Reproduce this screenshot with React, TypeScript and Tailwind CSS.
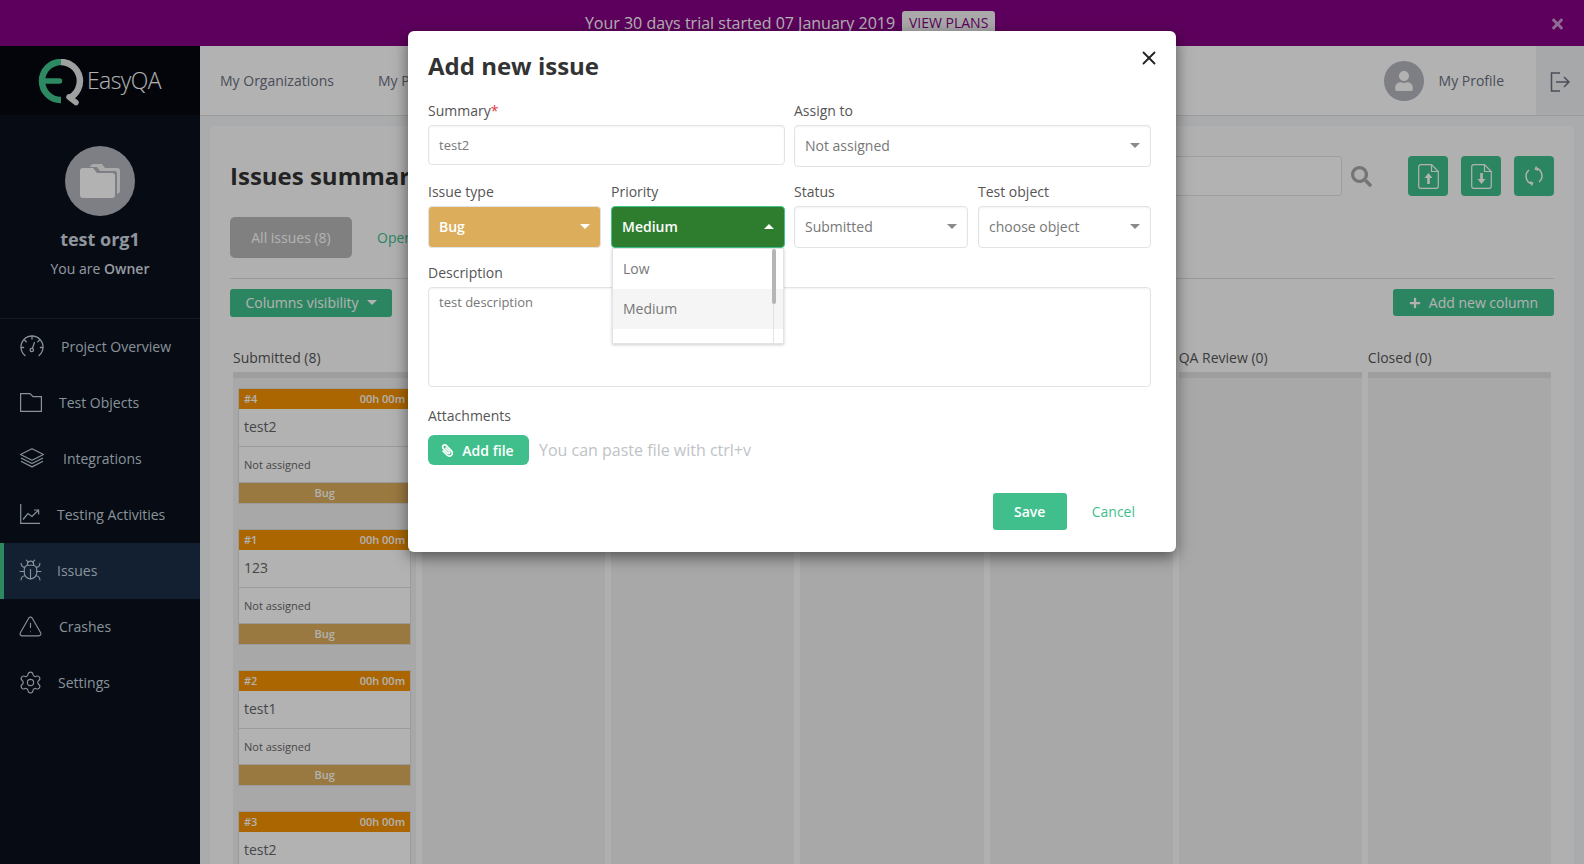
import React from "react";
import { Bug, TriangleAlert, Settings, X } from "lucide-react";
import { FaPaperclip, FaPlus, FaSearch, FaTimes, FaUser } from "react-icons/fa";

type IconProps = { className?: string };

function GaugeIcon({ className }: IconProps) {
  return (
    <svg className={className} width="24" height="22" viewBox="0 0 24 22" fill="none" stroke="currentColor" strokeWidth="1.3" strokeLinecap="round">
      <path d="M5 20.5 A11 11 0 1 1 19 20.5" />
      <path d="M12 1.5V4 M4.5 5 L6.2 6.7 M19.5 5 L17.8 6.7 M1.2 12.5H3.6 M22.8 12.5H20.4" />
      <path d="M12.4 13.5 L14.4 7.5" />
      <circle cx="11.8" cy="15" r="1.7" />
    </svg>
  );
}

function FolderIcon({ className }: IconProps) {
  return (
    <svg className={className} width="22" height="19" viewBox="0 0 22 19" fill="none" stroke="currentColor" strokeWidth="1.2">
      <path d="M0.6 0.6 H10 L13 3.6 H21.4 V18.4 H0.6 Z" />
    </svg>
  );
}

function LayersIcon({ className }: IconProps) {
  return (
    <svg className={className} width="24" height="20" viewBox="0 0 24 20" fill="none" stroke="currentColor" strokeWidth="1.2" strokeLinejoin="round">
      <path d="M12 0.8 L23.5 6.5 L12 12.2 L0.5 6.5 Z" />
      <path d="M1 10 L12 15.5 L23 10" />
      <path d="M1 13.3 L12 18.9 L23 13.3" />
    </svg>
  );
}

function ChartIcon({ className }: IconProps) {
  return (
    <svg className={className} width="20" height="20" viewBox="0 0 20 20" fill="none" stroke="currentColor" strokeWidth="1.2">
      <path d="M0.7 0 V19.3 H20" />
      <path d="M3 15.5 L8 9.5 L12 12.5 L18.5 6" />
      <path d="M14 6 H18.6 V10.5" />
    </svg>
  );
}

function LogoutIcon({ className }: IconProps) {
  return (
    <svg className={className} width="20" height="20" viewBox="0 0 20 20" fill="none" stroke="currentColor" strokeWidth="1.5">
      <path d="M10 1 H1.5 V19 H10" />
      <path d="M6 10 H19 M14 5 L19 10 L14 15" />
    </svg>
  );
}

function FileArrowIcon({ down }: { down?: boolean }) {
  return (
    <svg width="21" height="25" viewBox="0 0 21 25" fill="none" stroke="#fff" strokeWidth="1.2">
      <path d="M3 0.7 H13.5 L20.3 7.5 V22 Q20.3 24.3 18 24.3 H3 Q0.7 24.3 0.7 22 V3 Q0.7 0.7 3 0.7 Z" />
      <path d="M13.5 0.7 V7.5 H20.3" />
      {down ? (
        <path d="M9.2 9 H11.8 V15 H14.5 L10.5 20 L6.5 15 H9.2 Z" fill="#fff" stroke="none" />
      ) : (
        <path d="M9.2 20 H11.8 V14 H14.5 L10.5 9 L6.5 14 H9.2 Z" fill="#fff" stroke="none" />
      )}
    </svg>
  );
}

function BugIcon({ className }: IconProps) {
  return <Bug className={className} strokeWidth={1.1} />;
}
function AlertIcon({ className }: IconProps) {
  return <TriangleAlert className={className} strokeWidth={1.1} />;
}
function GearIcon({ className }: IconProps) {
  return <Settings className={className} strokeWidth={1.1} />;
}

const lucideClass = "w-[25px] h-[25px] -ml-[2px]";

const nav = [
  { label: "Project Overview", Icon: GaugeIcon, textClass: "ml-[17px]", iconClass: "" },
  { label: "Test Objects", Icon: FolderIcon, textClass: "ml-[15px]", iconClass: "" },
  { label: "Integrations", Icon: LayersIcon, textClass: "ml-[19px]", iconClass: "" },
  { label: "Testing Activities", Icon: ChartIcon, textClass: "ml-[13px]", iconClass: "" },
  { label: "Issues", Icon: BugIcon, textClass: "ml-[13px]", iconClass: lucideClass, active: true },
  { label: "Crashes", Icon: AlertIcon, textClass: "ml-[15px]", iconClass: lucideClass },
  { label: "Settings", Icon: GearIcon, textClass: "ml-[14px]", iconClass: lucideClass },
];

const cards = [
  { id: "#4", title: "test2" },
  { id: "#1", title: "123" },
  { id: "#2", title: "test1" },
  { id: "#3", title: "test2" },
];

const columns = ["Submitted (8)", "Open (0)", "In Progress (0)", "Resolved (0)", "Testing (0)", "QA Review (0)", "Closed (0)"];

function Logo() {
  return (
    <svg width="46" height="48" viewBox="0 0 46 48" className="shrink-0 mt-[4px]">
      <path d="M23 3 A19 19 0 0 0 23 41" fill="none" stroke="#41c48d" strokeWidth="6.5" />
      <path d="M23 3 A19 19 0 0 1 31 39.2" fill="none" stroke="#e6e6e6" strokeWidth="6.5" />
      <path d="M31 38 L38 43.5" fill="none" stroke="#e6e6e6" strokeWidth="5.5" strokeLinecap="round" />
      <path d="M7 22 H21.5" fill="none" stroke="#41c48d" strokeWidth="5.5" strokeLinecap="round" />
    </svg>
  );
}

function OrgFolders() {
  return (
    <svg width="40" height="36" viewBox="0 0 40 36">
      <path d="M14 1 H22 L25 5 H37 Q40 5 40 8 V28 Q40 30 37 31 V10 Q37 8 35 8 H20 L17 4 H10 Q11 1 14 1 Z" fill="#ffffff" fillOpacity="0.85" />
      <path d="M3 5 H13 L17 10 H32 Q35 10 35 13 V32 Q35 35 32 35 H3 Q0 35 0 32 V8 Q0 5 3 5 Z" fill="#ffffff" />
    </svg>
  );
}

function Caret({ up, color }: { up?: boolean; color: string }) {
  return (
    <svg width="10" height="5" viewBox="0 0 10 5" className="shrink-0">
      <path d={up ? "M0 5 L5 0 L10 5 Z" : "M0 0 L10 0 L5 5 Z"} fill={color} />
    </svg>
  );
}

function RefreshIcon() {
  return (
    <svg width="20" height="20" viewBox="0 0 20 20" fill="none" stroke="#fff" strokeWidth="1.5">
      <path d="M12.5 2.2 A8 8 0 0 1 15 16" />
      <path d="M7.5 17.8 A8 8 0 0 1 5 4" />
      <path d="M12.5 0.5 L11.5 3 L14 4" />
      <path d="M7.5 19.5 L8.5 17 L6 16" />
    </svg>
  );
}

function IssueCard({ id, title }: { id: string; title: string }) {
  return (
    <div className="h-[116px] mb-[25px] border border-[#dedede] bg-white flex flex-col shrink-0">
      <div className="h-[20px] bg-[#f59203] flex items-center justify-between pl-[5px] pr-[5px] text-[11px] text-white font-semibold">
        <span>{id}</span>
        <span>00h 00m</span>
      </div>
      <div className="h-[38px] flex items-center px-[5px] pb-[2px] text-[14px] text-[#666] border-b border-[#dedede]">{title}</div>
      <div className="h-[36px] flex items-center px-[5px] pt-[2px] text-[11px] text-[#666] border-b border-[#dedede]">Not assigned</div>
      <div className="h-[20px] bg-[#dcae5c] flex items-center justify-center text-[11px] text-white font-semibold">Bug</div>
    </div>
  );
}

function Field({ label, width, children, required }: { label: string; width: string; children: React.ReactNode; required?: boolean }) {
  return (
    <div className={`${width} relative shrink-0`}>
      <div className="h-[20px] text-[14px] leading-[20px] text-[#555] mb-[4px]">
        {label}
        {required && <span className="text-[#e0383e]">*</span>}
      </div>
      {children}
    </div>
  );
}

function SelectBox({ value }: { value: string }) {
  return (
    <div className="h-[42px] border border-[#e3e3e3] rounded-[4px] bg-white flex items-center justify-between pl-[10px] pr-[10px] pb-[2px] text-[14px] text-[#777] shadow-[inset_0_1px_2px_rgba(0,0,0,0.05)]">
      <span>{value}</span>
      <Caret color="#8a8a8a" />
    </div>
  );
}

export default function App() {
  return (
    <div className="relative h-screen w-full overflow-hidden font-['Open_Sans',sans-serif] bg-[#f4f5f6]">
      <div className="h-[46px] bg-[#860086] flex items-center justify-center relative text-white text-[16px]">
        <div className="flex items-center gap-[7px] ml-[-4px]">
          <span>Your 30 days trial started 07 January 2019</span>
          <span className="h-[24px] w-[93px] text-center bg-[#f2f2f2] text-[#860086] text-[14px] leading-[24px] rounded-[3px]">VIEW PLANS</span>
        </div>
        <FaTimes className="absolute right-[19px] top-[16px] w-[15px] h-[16px] text-white/60" />
      </div>

      <div className="flex h-[818px]">
        <aside className="w-[200px] shrink-0 bg-[#09101d] flex flex-col">
          <div className="h-[69px] bg-[#050811] flex items-center pl-[38px] gap-[3px]">
            <Logo />
            <span className="text-[23px] font-light text-white tracking-[-0.6px]">EasyQA</span>
          </div>
          <div className="h-[204px] border-b border-[#1c2838] flex flex-col items-center pt-[31px]">
            <div className="w-[70px] h-[70px] rounded-full bg-[#b4b6be] flex items-center justify-center">
              <OrgFolders />
            </div>
            <div className="mt-[10px] text-[18px] font-bold text-[#cfd6e0] leading-[26px]">test org1</div>
            <div className="mt-[7px] text-[14px] text-[#d8dde4] leading-[20px]">
              You are <span className="font-semibold">Owner</span>
            </div>
          </div>
          <nav className="flex flex-col">
            {nav.map(({ label, Icon, textClass, iconClass, active }) => (
              <div
                key={label}
                className={
                  active
                    ? "h-[56px] flex items-center pl-[16px] pb-[2px] border-l-[4px] border-[#41c48d] bg-[#1a2e48] text-[#c4d0dc] text-[14px]"
                    : "h-[56px] flex items-center pl-[20px] pb-[2px] text-[#c4d0dc] text-[14px]"
                }
              >
                <span className="w-[24px] flex items-center justify-start">
                  <Icon className={iconClass} />
                </span>
                <span className={textClass}>{label}</span>
              </div>
            ))}
          </nav>
        </aside>

        <div className="flex-1 flex flex-col min-w-0">
          <header className="h-[70px] shrink-0 bg-white border-b border-[#e0e0e0] flex items-stretch text-[14px] text-[#6a6f80]">
            <div className="flex items-center pl-[20px] gap-[44px]">
              <span>My Organizations</span>
              <span>My Projects</span>
            </div>
            <div className="ml-auto flex items-center">
              <div className="w-[40px] h-[40px] rounded-full bg-[#b4b6be] flex items-center justify-center">
                <FaUser className="w-[18px] h-[20px] text-white" />
              </div>
              <span className="ml-[15px] mr-[32px]">My Profile</span>
            </div>
            <div className="w-[48px] bg-[#f0f1f3] flex items-center justify-center">
              <LogoutIcon className="text-[#6a6f80] mt-[2px]" />
            </div>
          </header>

          <main className="flex-1 min-h-0 pt-[10px] pl-[10px] pr-[10px] overflow-hidden">
            <div className="bg-[#fdfdfd] rounded-t-[5px] h-full px-[20px] pt-[30px]">
              <div className="flex items-center h-[40px]">
                <h1 className="text-[24px] font-bold text-[#333]">Issues summary</h1>
                <div className="ml-auto w-[300px] h-[40px] border border-[#e3e3e3] rounded-[3px] bg-white" />
                <FaSearch className="ml-[9px] w-[21px] h-[21px] text-[#a8a8a8]" />
                <div className="ml-[36px] flex gap-[13px]">
                  <div className="w-[40px] h-[40px] rounded-[4px] bg-[#40bf8c] flex items-center justify-center"><FileArrowIcon /></div>
                  <div className="w-[40px] h-[40px] rounded-[4px] bg-[#40bf8c] flex items-center justify-center"><FileArrowIcon down /></div>
                  <div className="w-[40px] h-[40px] rounded-[4px] bg-[#40bf8c] flex items-center justify-center"><RefreshIcon /></div>
                </div>
              </div>

              <div className="mt-[21px] flex items-center gap-[25px] h-[41px]">
                <div className="w-[122px] h-[41px] rounded-[5px] bg-[#b8b8b8] text-white text-[14px] flex items-center justify-center">All issues (8)</div>
                <span className="text-[14px] text-[#40bf8c]">Open issues</span>
              </div>

              <div className="mt-[20px] border-t border-[#dcdcdc]" />

              <div className="mt-[10px] flex justify-between items-start">
                <div className="w-[162px] h-[28px] rounded-[3px] bg-[#40bf8c] text-white text-[14px] pb-[2px] flex items-center justify-center gap-[8px]">
                  <span>Columns visibility</span>
                  <Caret color="#ffffff" />
                </div>
                <div className="w-[161px] h-[27px] rounded-[3px] bg-[#40bf8c] text-white text-[14px] flex items-center justify-center gap-[8px]">
                  <FaPlus className="w-[12px] h-[12px]" />
                  <span>Add new column</span>
                </div>
              </div>

              <div className="flex gap-[6px] px-[3px]">
                {columns.map((c, i) => (
                  <div key={c} className="flex-1 min-w-0">
                    <div className="pt-[31px] h-[55px] text-[14px] leading-[20px] text-[#555]">{c}</div>
                    <div className="h-[6px] bg-[#e3e3e3]" />
                    <div className="bg-[#f1f1f1] h-[600px] px-[5px] pt-[10px] flex flex-col">
                      {i === 0 && cards.map((card) => <IssueCard key={card.id} id={card.id} title={card.title} />)}
                    </div>
                  </div>
                ))}
              </div>
            </div>
          </main>
        </div>
      </div>

      <div className="absolute inset-0 bg-black/30" />

      <div className="absolute left-[408px] top-[31px] w-[768px] h-[521px] bg-white rounded-[6px] shadow-[0_5px_15px_rgba(0,0,0,0.5)] pl-[20px] pr-[25px]">
        <X className="absolute right-[16px] top-[16px] w-[22px] h-[22px] text-[#222]" strokeWidth={2} />
        <h2 className="pt-[17px] h-[70px] text-[24px] leading-[36px] font-bold text-[#333]">Add new issue</h2>

        <div className="flex gap-[9px]">
          <Field label="Summary" width="w-[357px]" required>
            <div className="h-[40px] border border-[#e3e3e3] rounded-[4px] pl-[10px] pt-[1px] flex items-center text-[13px] text-[#777] shadow-[inset_0_1px_2px_rgba(0,0,0,0.05)]">test2</div>
          </Field>
          <Field label="Assign to" width="w-[357px]">
            <SelectBox value="Not assigned" />
          </Field>
        </div>

        <div className="flex mt-[15px]">
          <Field label="Issue type" width="w-[173px] mr-[10px]">
            <div className="h-[42px] border border-[#e3e3e3] rounded-[4px] bg-[#dcae5c] flex items-center justify-between pl-[10px] pr-[10px] pb-[2px] text-[14px] font-semibold text-white">
              <span>Bug</span>
              <Caret color="#ffffff" />
            </div>
          </Field>
          <Field label="Priority" width="w-[174px] mr-[9px]">
            <div className="h-[42px] border border-[#41c48d] rounded-[4px] bg-[#2e7d2e] flex items-center justify-between pl-[10px] pr-[10px] pb-[2px] text-[14px] font-semibold text-white">
              <span>Medium</span>
              <Caret up color="#ffffff" />
            </div>
            <div className="absolute z-10 left-[1px] right-[1px] top-[66px] h-[96px] bg-white border border-[#e3e3e3] shadow-[0_1px_3px_rgba(0,0,0,0.2)] overflow-hidden">
              <div className="h-[40px] flex items-center pl-[10px] pb-[2px] text-[14px] text-[#777]">Low</div>
              <div className="h-[40px] flex items-center pl-[10px] pb-[2px] text-[14px] text-[#777] bg-[#f5f5f5]">Medium</div>
              <div className="absolute right-[9px] top-0 bottom-0 w-px bg-[#e3e3e3]" />
              <div className="absolute right-[7px] top-0 w-[4px] h-[55px] rounded-[2px] bg-[#b5b5b5]" />
            </div>
          </Field>
          <Field label="Status" width="w-[174px] mr-[10px]">
            <SelectBox value="Submitted" />
          </Field>
          <Field label="Test object" width="w-[173px]">
            <SelectBox value="choose object" />
          </Field>
        </div>

        <div className="mt-[15px]">
          <Field label="Description" width="w-[723px]">
            <div className="h-[100px] border border-[#e3e3e3] rounded-[4px] pl-[10px] pt-[5px] text-[13px] text-[#777] shadow-[inset_0_1px_2px_rgba(0,0,0,0.05)]">test description</div>
          </Field>
        </div>

        <div className="mt-[19px] h-[20px] text-[14px] leading-[20px] text-[#555]">Attachments</div>
        <div className="mt-[9px] flex items-center">
          <div className="w-[101px] h-[30px] rounded-[6px] bg-[#40bf8c] text-white text-[14px] font-semibold flex items-center justify-center gap-[8px] pr-[2px]">
            <FaPaperclip className="w-[13px] h-[13px] -scale-x-100" />
            <span>Add file</span>
          </div>
          <span className="ml-[10px] text-[16px] text-[#c0c3c6]">You can paste file with ctrl+v</span>
        </div>

        <div className="mt-[28px] flex items-center">
          <div className="ml-auto w-[74px] h-[37px] rounded-[3px] bg-[#40bf8c] text-white text-[14px] font-semibold flex items-center justify-center">Save</div>
          <span className="ml-[25px] mr-[16px] text-[14px] text-[#40bf8c]">Cancel</span>
        </div>
      </div>
    </div>
  );
}
